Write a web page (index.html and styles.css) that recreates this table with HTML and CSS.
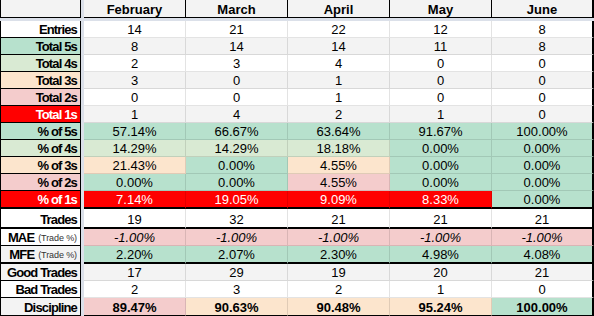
FILE: index.html
```html
<!DOCTYPE html>
<html>
<head>
<meta charset="utf-8">
<link rel="stylesheet" href="styles.css">
</head>
<body>
<div class="sheet">
  <div class="row head">
    <div class="lab gr"></div>
    <div class="hc">February</div><div class="hc">March</div><div class="hc">April</div><div class="hc">May</div><div class="hc end">June</div>
  </div>

  <div class="row">
    <div class="lab w">Entries</div>
    <div class="c w">14</div><div class="c w">21</div><div class="c w">22</div><div class="c w">12</div><div class="c w end">8</div>
  </div>
  <div class="row">
    <div class="lab g">Total 5s</div>
    <div class="c gr">8</div><div class="c gr">14</div><div class="c gr">14</div><div class="c gr">11</div><div class="c gr end">8</div>
  </div>
  <div class="row">
    <div class="lab lg">Total 4s</div>
    <div class="c w">2</div><div class="c w">3</div><div class="c w">4</div><div class="c w">0</div><div class="c w end">0</div>
  </div>
  <div class="row">
    <div class="lab o">Total 3s</div>
    <div class="c gr">3</div><div class="c gr">0</div><div class="c gr">1</div><div class="c gr">0</div><div class="c gr end">0</div>
  </div>
  <div class="row">
    <div class="lab p">Total 2s</div>
    <div class="c w">0</div><div class="c w">0</div><div class="c w">1</div><div class="c w">0</div><div class="c w end">0</div>
  </div>
  <div class="row">
    <div class="lab r">Total 1s</div>
    <div class="c gr">1</div><div class="c gr">4</div><div class="c gr">2</div><div class="c gr">1</div><div class="c gr end">0</div>
  </div>
  <div class="row">
    <div class="lab g">% of 5s</div>
    <div class="c g">57.14%</div><div class="c g">66.67%</div><div class="c g">63.64%</div><div class="c g">91.67%</div><div class="c g end">100.00%</div>
  </div>
  <div class="row">
    <div class="lab lg">% of 4s</div>
    <div class="c lg">14.29%</div><div class="c lg">14.29%</div><div class="c lg">18.18%</div><div class="c g">0.00%</div><div class="c g end">0.00%</div>
  </div>
  <div class="row">
    <div class="lab o">% of 3s</div>
    <div class="c o">21.43%</div><div class="c g">0.00%</div><div class="c o">4.55%</div><div class="c g">0.00%</div><div class="c g end">0.00%</div>
  </div>
  <div class="row">
    <div class="lab p">% of 2s</div>
    <div class="c g">0.00%</div><div class="c g">0.00%</div><div class="c p">4.55%</div><div class="c g">0.00%</div><div class="c g end">0.00%</div>
  </div>
  <div class="row thick">
    <div class="lab r">% of 1s</div>
    <div class="c r">7.14%</div><div class="c r">19.05%</div><div class="c r">9.09%</div><div class="c r">8.33%</div><div class="c g end">0.00%</div>
  </div>
  <div class="row thick tall">
    <div class="lab w">Trades</div>
    <div class="c w">19</div><div class="c w">32</div><div class="c w">21</div><div class="c w">21</div><div class="c w end">21</div>
  </div>
  <div class="row">
    <div class="lab w">MAE <span class="sub">(Trade %)</span></div>
    <div class="c p it">-1.00%</div><div class="c p it">-1.00%</div><div class="c p it">-1.00%</div><div class="c p it">-1.00%</div><div class="c p it end">-1.00%</div>
  </div>
  <div class="row thick">
    <div class="lab gr">MFE <span class="sub">(Trade %)</span></div>
    <div class="c g">2.20%</div><div class="c g">2.07%</div><div class="c g">2.30%</div><div class="c g">4.98%</div><div class="c g end">4.08%</div>
  </div>
  <div class="row">
    <div class="lab gr">Good Trades</div>
    <div class="c gr">17</div><div class="c gr">29</div><div class="c gr">19</div><div class="c gr">20</div><div class="c gr end">21</div>
  </div>
  <div class="row">
    <div class="lab w">Bad Trades</div>
    <div class="c w">2</div><div class="c w">3</div><div class="c w">2</div><div class="c w">1</div><div class="c w end">0</div>
  </div>
  <div class="row last">
    <div class="lab gr">Discipline</div>
    <div class="c p b">89.47%</div><div class="c o b">90.63%</div><div class="c o b">90.48%</div><div class="c o b">95.24%</div><div class="c g b end">100.00%</div>
  </div>
</div>
</body>
</html>
```
FILE: styles.css
```css
* { box-sizing: border-box; }
html, body { margin: 0; padding: 0; background: #ffffff; }
.sheet {
  width: 594px;
  height: 316px;
  background: #dbe0e9;
  font-family: "Liberation Sans", Arial, sans-serif;
  font-size: 13px;
  color: #000;
  display: flex;
  flex-direction: column;
}
.row {
  display: flex;
  height: 17px;
}
.row.head { height: 18px; margin-bottom: 3px; }
.row.thick { height: 18px; }
.row.thick.tall { height: 20px; }
.row.last { height: 18px; }

.lab, .c, .hc {
  display: flex;
  align-items: flex-end;
  line-height: 14px;
  white-space: nowrap;
  overflow: hidden;
}
.lab {
  width: 81px;
  margin-right: 3px;
  justify-content: flex-end;
  padding-right: 3px;
  font-weight: bold;
  letter-spacing: -0.85px;
  border-left: 1px solid #000;
  border-right: 1px solid #000;
  border-bottom: 1px solid #000;
}
.lab .sub {
  font-weight: normal;
  font-size: 9px;
  letter-spacing: -0.1px;
  color: #333;
  margin-left: 4px;
  line-height: 14px;
}
.hc {
  width: 102px;
  justify-content: center;
  font-weight: bold;
  background: #f3f3f3;
  border-right: 1px solid #000;
  border-bottom: 1px solid #000;
}
.c {
  width: 102px;
  justify-content: center;
  border-right: 1px solid rgba(0, 0, 0, 0.11);
  border-bottom: 1px solid rgba(0, 0, 0, 0.11);
}
.hc.end, .c.end { border-right: 2px solid #000; }
.thick .lab, .thick .c { border-bottom: 2px solid #000; }
.last .c { border-bottom: 1px solid #000; }

.w { background: #ffffff; }
.gr { background: #f3f3f3; }
.g { background: #b7e1cd; }
.lg { background: #d9ead3; }
.o { background: #fce5cd; }
.p { background: #f4cccc; }
.r { background: #ff0000; color: #ffffff; }
.it { font-style: italic; }
.b { font-weight: bold; }
```
